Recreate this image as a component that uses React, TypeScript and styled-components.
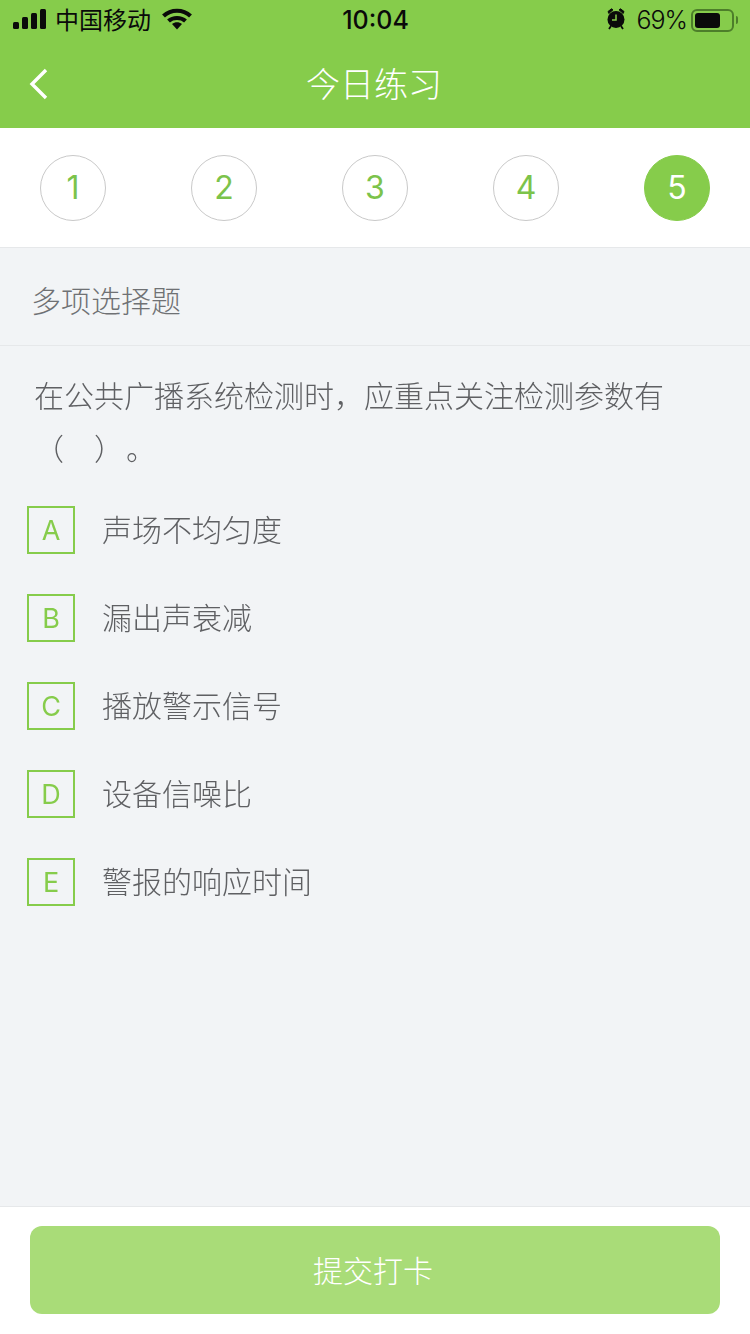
import React from 'react';
import styled, {createGlobalStyle} from 'styled-components';

const GREEN = '#86cc4b';
const CJK = `"Noto Sans CJK SC", "Liberation Sans", sans-serif`;

const steps = [1, 2, 3, 4, 5];
const options = [
    {key: 'A', text: '声场不均匀度'},
    {key: 'B', text: '漏出声衰减'},
    {key: 'C', text: '播放警示信号'},
    {key: 'D', text: '设备信噪比'},
    {key: 'E', text: '警报的响应时间'},
];

const App = () => (
    <Page>
        <GlobalStyle/>
        <Header>
            <StatusBar>
                <StatusSide>
                    <SignalIcon width="33" height="20" viewBox="0 0 33 20">
                        <rect x="0" y="13" width="6" height="7" rx="1.500" fill="#0a0a0a"/>
                        <rect x="9" y="8" width="6" height="12" rx="1.500" fill="#0a0a0a"/>
                        <rect x="18" y="4" width="6" height="16" rx="1.500" fill="#0a0a0a"/>
                        <rect x="27" y="0" width="6" height="20" rx="1.500" fill="#0a0a0a"/>
                    </SignalIcon>
                    <Carrier>中国移动</Carrier>
                    <WifiIcon width="30" height="22" viewBox="0 0 30 22">
                        <path d="M1.500 8 C9 1 21 1 28.500 8" fill="none" stroke="#0a0a0a" strokeWidth="4.200"/>
                        <path d="M6.500 13 C11 9 19 9 23.500 13" fill="none" stroke="#0a0a0a" strokeWidth="4.200"/>
                        <path d="M10 16 C13 13.800 17 13.800 20 16 L15 21.500 Z" fill="#0a0a0a"/>
                    </WifiIcon>
                </StatusSide>
                <Clock>10:04</Clock>
                <StatusSide>
                    <AlarmIcon width="22" height="22" viewBox="0 0 22 22">
                        <circle cx="11" cy="11.500" r="8.500" fill="#0a0a0a"/>
                        <path d="M11 6.500v5.500H7" fill="none" stroke={GREEN} strokeWidth="1.500"/>
                        <path d="M3 3.500 L6.500 .8 L8 1.800 L3.800 5.500Z M19 3.500 L15.500 .8 L14 1.800 L18.200 5.500Z" fill="#0a0a0a" stroke="#0a0a0a"/>
                        <path d="M6 18l-2 3M16 18l2 3" stroke="#0a0a0a" strokeWidth="1.800"/>
                    </AlarmIcon>
                    <Percent>69%</Percent>
                    <Battery><BatteryFill/></Battery>
                    <BatteryCap/>
                </StatusSide>
            </StatusBar>
            <NavBar>
                <BackIcon width="22" height="32" viewBox="0 0 22 32">
                    <path d="M18 2 L4 16 L18 30" fill="none" stroke="#fff" strokeWidth="3.400"/>
                </BackIcon>
                <Title>今日练习</Title>
            </NavBar>
        </Header>

        <Steps>
            {steps.map(step => (
                <Step key={step} active={step === 5}>{step}</Step>
            ))}
        </Steps>

        <SectionLabel>多项选择题</SectionLabel>

        <Main>
            <Question>
                在公共广播系统检测时，应重点关注检测参数有
                <br/>
                （　）<BlankGap/>。
            </Question>
            <OptionList>
                {options.map(option => (
                    <Option key={option.key}>
                        <OptionKey>{option.key}</OptionKey>
                        <OptionText>{option.text}</OptionText>
                    </Option>
                ))}
            </OptionList>
        </Main>

        <Footer>
            <SubmitButton>提交打卡</SubmitButton>
        </Footer>
    </Page>
);

export default App;

const GlobalStyle = createGlobalStyle`
    html, body {
        margin: 0;
        padding: 0;
        background: #f2f4f6;
    }
`;

const Page = styled.div`
    width: 750px;
    height: 1334px;
    display: flex;
    flex-direction: column;
    overflow: hidden;
    background: #f2f4f6;
    font-family: ${CJK};
`;

const Header = styled.header`
    height: 128px;
    flex: none;
    background: ${GREEN};
`;

const StatusBar = styled.div`
    height: 40px;
    padding: 0 12px 0 13px;
    display: grid;
    grid-template-columns: 1fr auto 1fr;
    align-items: center;
    color: #0a0a0a;

    > :last-child {
        justify-content: flex-end;
    }
`;

const StatusSide = styled.div`
    display: flex;
    align-items: center;
    gap: 6px;
`;

const SignalIcon = styled.svg`
    margin: -2px 1px 0 0;
`;

const WifiIcon = styled.svg`
    margin-top: -2px;
`;

const Carrier = styled.span`
    font-size: 24px;
    margin: 0 5px 0 2px;
    padding-bottom: 3px;
    line-height: 1;
`;

const Clock = styled.span`
    font: 500 25px "Inter", "Liberation Sans", sans-serif;
`;

const AlarmIcon = styled.svg`
    margin: -2px 3px 0 0;
`;

const Percent = styled.span`
    margin-right: -2px;
    font: 300 25px "Inter", "Liberation Sans", sans-serif;
    letter-spacing: -1px;
`;

const Battery = styled.div`
    width: 43px;
    height: 23px;
    padding: 2px;
    box-sizing: border-box;
    border: 2px solid #4d7e2a;
    border-radius: 6px;
`;

const BatteryFill = styled.div`
    width: 25px;
    height: 100%;
    background: #0a0a0a;
    border-radius: 3px;
`;

const BatteryCap = styled.div`
    width: 2px;
    height: 8px;
    margin-left: -4px;
    background: #4d7e2a;
    border-radius: 0 2px 2px 0;
`;

const NavBar = styled.div`
    height: 88px;
    position: relative;
    display: flex;
    align-items: center;
    justify-content: center;
`;

const BackIcon = styled.svg`
    position: absolute;
    left: 28px;
    top: 28px;
`;

const Title = styled.h1`
    margin: 0 2px 3px 0;
    font-size: 34px;
    font-weight: 300;
    line-height: 1;
    color: #fff;
`;

const Steps = styled.div`
    height: 119px;
    flex: none;
    padding: 0 40px;
    display: flex;
    align-items: center;
    justify-content: space-between;
    background: #fff;
    border-bottom: 1px solid #e6e8ea;
`;

const Step = styled.div<{active?: boolean}>`
    width: 66px;
    height: 66px;
    box-sizing: border-box;
    display: flex;
    align-items: center;
    justify-content: center;
    border-radius: 50%;
    border: 1px solid ${props => (props.active ? GREEN : '#c9c9c9')};
    background: ${props => (props.active ? GREEN : '#fff')};
    color: ${props => (props.active ? '#fff' : '#7cc34b')};
    font: 400 32px "Inter", "Liberation Sans", sans-serif;
`;

const SectionLabel = styled.div`
    height: 98px;
    flex: none;
    box-sizing: border-box;
    padding: 5px 0 0 31px;
    display: flex;
    align-items: center;
    border-bottom: 1px solid #e6e8ea;
    font-size: 30px;
    font-weight: 300;
    color: #6f7174;
`;

const Main = styled.main`
    flex: 1;
    padding: 22px 27px 0;
    will-change: transform;
`;

const Question = styled.p`
    margin: 0 0 0 7px;
    font-size: 30px;
    font-weight: 300;
    line-height: 53px;
    color: #5f6063;
`;

const BlankGap = styled.span`
    display: inline-block;
    width: 2px;
`;

const OptionList = styled.div`
    margin-top: 32px;
    display: flex;
    flex-direction: column;
    gap: 40px;
`;

const Option = styled.div`
    height: 48px;
    display: flex;
    align-items: center;
    gap: 27px;
`;

const OptionKey = styled.div`
    width: 48px;
    height: 48px;
    box-sizing: border-box;
    padding-top: 1px;
    display: flex;
    align-items: center;
    justify-content: center;
    border: 2px solid ${GREEN};
    color: ${GREEN};
    font: 400 27px "Inter", "Liberation Sans", sans-serif;
`;

const OptionText = styled.span`
    padding-bottom: 4px;
    font-size: 30px;
    font-weight: 300;
    color: #5f6063;
`;

const Footer = styled.footer`
    height: 128px;
    flex: none;
    box-sizing: border-box;
    padding: 19px 30px 0;
    background: #fff;
    border-top: 1px solid #e6e8ea;
`;

const SubmitButton = styled.div`
    height: 88px;
    box-sizing: border-box;
    padding: 0 4px 2px 0;
    display: flex;
    align-items: center;
    justify-content: center;
    border-radius: 12px;
    background: #a9dc78;
    color: #fff;
    font-size: 30px;
    font-weight: 300;
`;
